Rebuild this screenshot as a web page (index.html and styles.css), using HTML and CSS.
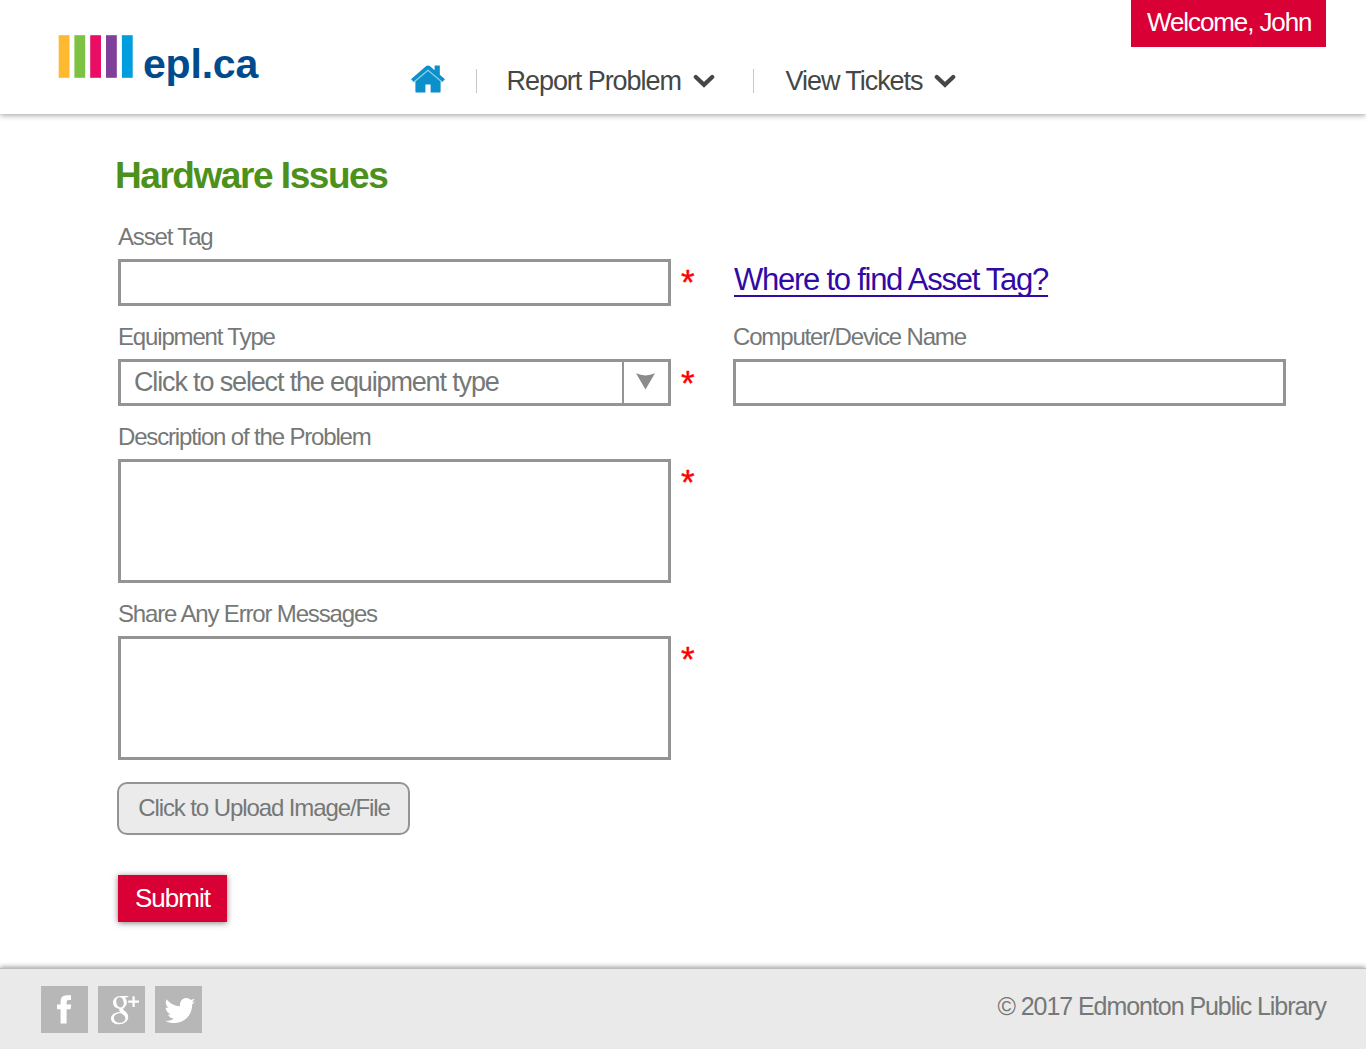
FILE: index.html
```html
<!DOCTYPE html>
<html lang="en">
<head>
<meta charset="utf-8">
<title>Hardware Issues</title>
<link rel="stylesheet" href="styles.css">
</head>
<body>
<header class="header">
  <a class="logo">
    <svg class="logo-bars" width="75" height="43" viewBox="0 0 75 43">
      <rect x=".7" y=".2" width="10.8" height="42.6" fill="#fdb930"/>
      <rect x="16.4" y=".2" width="10.8" height="42.6" fill="#7dc242"/>
      <rect x="32.2" y=".2" width="10.8" height="42.6" fill="#e90d64"/>
      <rect x="48" y=".2" width="10.8" height="42.6" fill="#7e4099"/>
      <rect x="63.9" y=".2" width="10.8" height="42.6" fill="#009ddf"/>
    </svg>
    <span class="logo-text">epl.ca</span>
  </a>
  <nav class="nav">
    <a class="home">
      <svg width="34" height="28" viewBox="0 0 34 28">
        <path d="M17 4.5 29.6 15.5V26.4a1.200 1.200 0 0 1-1.200 1.200H19.6V19.6H14.4V27.6H5.600a1.200 1.200 0 0 1-1.200-1.200V15.5Z" fill="#0b90cb"/>
        <path d="M3 17 17 5.200 31 17" fill="none" stroke="#8fd0ea" stroke-width="1.300"/>
        <path d="M23.6 .4H28.8V9.700L34 14.200 31.6 16.700 17 4.500 2.400 16.700 0 14.200 14.900 1.300Q17-.5 19.100 1.300L23.6 5.200Z" fill="#0b90cb"/>
      </svg>
    </a>
    <a class="nav-item report">Report Problem
      <svg class="chevron" width="22" height="14" viewBox="0 0 22 14"><path d="M2.8 3 11 10.8 19.2 3"/></svg>
    </a>
    <a class="nav-item tickets">View Tickets
      <svg class="chevron" width="22" height="14" viewBox="0 0 22 14"><path d="M2.8 3 11 10.8 19.2 3"/></svg>
    </a>
  </nav>
  <div class="welcome">Welcome, John</div>
</header>

<main class="main">
  <h1 class="title">Hardware Issues</h1>
  <form class="form">
    <div class="row">
      <div class="field">
        <label class="label" for="asset">Asset Tag</label>
        <input class="input" id="asset" type="text">
      </div>
      <span class="required">*</span>
      <a class="help">Where to find Asset Tag?</a>
    </div>
    <div class="row">
      <div class="field">
        <span class="label">Equipment Type</span>
        <div class="input select">
          <span class="select-text">Click to select the equipment type</span>
          <span class="select-arrow">
            <svg width="19" height="17" viewBox="0 0 19 17"><path d="M0 .3Q9.5 4.6 19 .3L9.5 16.6Z" fill="#8b8b8b"/></svg>
          </span>
        </div>
      </div>
      <span class="required lower">*</span>
      <div class="field">
        <label class="label" for="device">Computer/Device Name</label>
        <input class="input" id="device" type="text">
      </div>
    </div>
    <div class="row">
      <div class="field">
        <label class="label" for="description">Description of the Problem</label>
        <textarea class="input area" id="description"></textarea>
      </div>
      <span class="required">*</span>
    </div>
    <div class="row">
      <div class="field">
        <label class="label" for="errors">Share Any Error Messages</label>
        <textarea class="input area" id="errors"></textarea>
      </div>
      <span class="required">*</span>
    </div>
    <button class="upload" type="button">Click to Upload Image/File</button>
    <button class="submit" type="button">Submit</button>
  </form>
</main>

<footer class="footer">
  <div class="social">
    <a class="tile">
      <svg width="47" height="47" viewBox="0 0 47 47"><path d="M30 9.2H25.6Q19.6 9.2 19.6 15.4V18.4H16V23.2H19.6V37.4H25.6V23.2H29.6L30.2 18.4H25.6V15.8Q25.6 14 27.4 14H30Z" fill="#fff"/></svg>
    </a>
    <a class="tile">
      <svg width="47" height="47" viewBox="0 0 47 47">
        <path fill="#fff" fill-rule="evenodd" d="M30.800 10H22.600C18 10 15 13 15 16.600C15 20 17.600 22.800 21.400 22.700C20.800 24 21.200 25 22.200 26C16.500 26.200 13 29 13 32.400C13 36 16.500 38.200 21 38.200C26.600 38.200 30.200 35 30.200 31C30.200 28.200 28.800 26.600 26.400 24.800C24.600 23.400 24.800 22.600 26.400 21.200C28 19.800 28.800 18.400 28.800 16C28.800 14 28 12.400 26.600 11.400H29ZM21.400 11.200C24 11 25.700 14 25.800 17C25.900 19.600 24.600 21.400 22.600 21.400C20 21.400 18.300 18.600 18.200 15.600C18.100 13 19.400 11.300 21.400 11.200ZM23 27.300C26 29.300 27.400 30.300 27.400 32.600C27.400 35.200 25.400 36.800 22 36.800C18.400 36.800 15.900 35 15.900 32C15.900 29 18.800 27.300 23 27.300Z"/>
        <path d="M35.600 10.200V21M30.200 15.600H41" fill="none" stroke="#fff" stroke-width="2.200"/>
      </svg>
    </a>
    <a class="tile">
      <svg width="47" height="47" viewBox="0 0 47 47"><path fill="#fff" d="M40 15.200L37 16.400L39.600 12.600L35.800 14C32.400 10.200 25 11.800 25 19V20.200C19.500 20 15 17.200 11.500 13.200C10 17 11 20 13.400 22L10.600 21.400C10.800 25 13 27 16 28.400L13 28.600C14 31 16 32.400 19 32.600C16.500 34.400 13.500 35.200 10 34.800C14 37 18.500 37.400 22 36.800C31 35.600 37.200 28 37.200 18.600Z"/></svg>
    </a>
  </div>
  <p class="copyright">© 2017 Edmonton Public Library</p>
</footer>
</body>
</html>
```
FILE: styles.css
```css
* { box-sizing: border-box; }

body {
  margin: 0;
  min-height: 1049px;
  display: flex;
  flex-direction: column;
  background: #fff;
  color: #757877;
  font-family: "Liberation Sans", Arial, sans-serif;
  font-size: 24px;
  line-height: 28px;
}

.header {
  display: flex;
  height: 114px;
  padding: 0 40px 0 58px;
  box-shadow: 0 1px 6px rgba(0, 0, 0, .4);
}

.logo {
  display: flex;
  width: 353px;
  padding-top: 35px;
}

.logo-bars { flex: none; }

.logo-text {
  margin: 5px 0 0 10px;
  color: #004b8d;
  font-size: 41px;
  font-weight: bold;
  line-height: 48px;
  letter-spacing: -.2px;
}

.nav {
  display: flex;
  align-items: center;
  height: 24px;
  margin-top: 69px;
  color: #444746;
  font-size: 27px;
  letter-spacing: -1.05px;
}

.home {
  display: flex;
  width: 65px;
  margin-top: -4px;
}

.nav-item {
  display: flex;
  align-items: center;
  height: 24px;
  gap: 12px;
  border-left: 1px solid #c8c8c8;
  white-space: nowrap;
}

.report {
  width: 277px;
  padding-left: 29.500px;
}

.tickets { padding-left: 31.500px; }

.chevron {
  fill: none;
  stroke: #444648;
  stroke-width: 4.2;
  stroke-linecap: round;
}

.welcome {
  width: 195px;
  height: 47px;
  margin-left: auto;
  padding-left: 16px;
  background: #d80035;
  color: #fff;
  font-size: 26px;
  line-height: 44px;
  letter-spacing: -1.1px;
  white-space: nowrap;
}

.main {
  flex: 1;
  padding: 41px 80px 0 118px;
}

.title {
  margin: 0 0 26px -3px;
  color: #4b911a;
  font-size: 37px;
  line-height: 42px;
  letter-spacing: -1.45px;
}

.form {
  display: flex;
  flex-direction: column;
  align-items: flex-start;
}

.row {
  display: flex;
  margin-bottom: 17px;
}

.field {
  display: flex;
  flex-direction: column;
  gap: 8px;
  width: 553px;
}

.label { letter-spacing: -1.16px; }

.input {
  display: block;
  width: 100%;
  height: 47px;
  margin: 0;
  padding: 0 13px;
  border: 3px solid #949494;
  border-radius: 0;
  background: #fff;
  color: inherit;
  font: inherit;
}

.area {
  height: 124px;
  resize: none;
}

.select {
  display: flex;
  padding-right: 0;
  font-size: 27px;
  line-height: 40px;
  letter-spacing: -1.15px;
}

.select-text { flex: 1; }

.select-arrow {
  display: flex;
  align-items: center;
  width: 46px;
  padding: 0 0 3px 12px;
  border-left: 2px solid #949494;
}

.required {
  width: 62px;
  margin-top: 39px;
  padding-left: 10px;
  color: #f00;
  font-size: 35px;
  line-height: 40px;
  -webkit-text-stroke: .4px #f00;
}

.lower { margin-top: 40px; }

.help {
  margin: 39px 0 0 1px;
  color: #310aa5;
  font-size: 31px;
  line-height: 36px;
  letter-spacing: -1.25px;
  text-decoration: underline 2px;
  text-decoration-skip-ink: none;
  text-underline-offset: 5px;
}

.upload {
  width: 293px;
  height: 53px;
  margin: 5px 0 40px -1px;
  padding: 0 0 2px 1px;
  border: 2px solid #949494;
  border-radius: 10px;
  background: #ebebeb;
  color: #757877;
  font: inherit;
  letter-spacing: -1.1px;
}

.submit {
  width: 109px;
  height: 47px;
  padding: 0 0 2px;
  border: 0;
  background: #d80035;
  box-shadow: 0 1px 6px rgba(0, 0, 0, .5);
  color: #fff;
  font: inherit;
  font-size: 26px;
  letter-spacing: -1px;
}

.footer {
  display: flex;
  justify-content: space-between;
  height: 81px;
  padding: 18px 40px 0 41px;
  background: #eaeaea;
  box-shadow: 0 -1px 5px rgba(0, 0, 0, .4);
  border-top: 1px solid #bcbcbc;
}

.social {
  display: flex;
  gap: 10px;
}

.tile {
  display: block;
  width: 47px;
  height: 47px;
  margin-top: -1px;
  background: #b7b7b7;
}

.tile svg { display: block; }

.copyright {
  margin: 5px 0 0;
  font-size: 25px;
  letter-spacing: -1.06px;
}
```
